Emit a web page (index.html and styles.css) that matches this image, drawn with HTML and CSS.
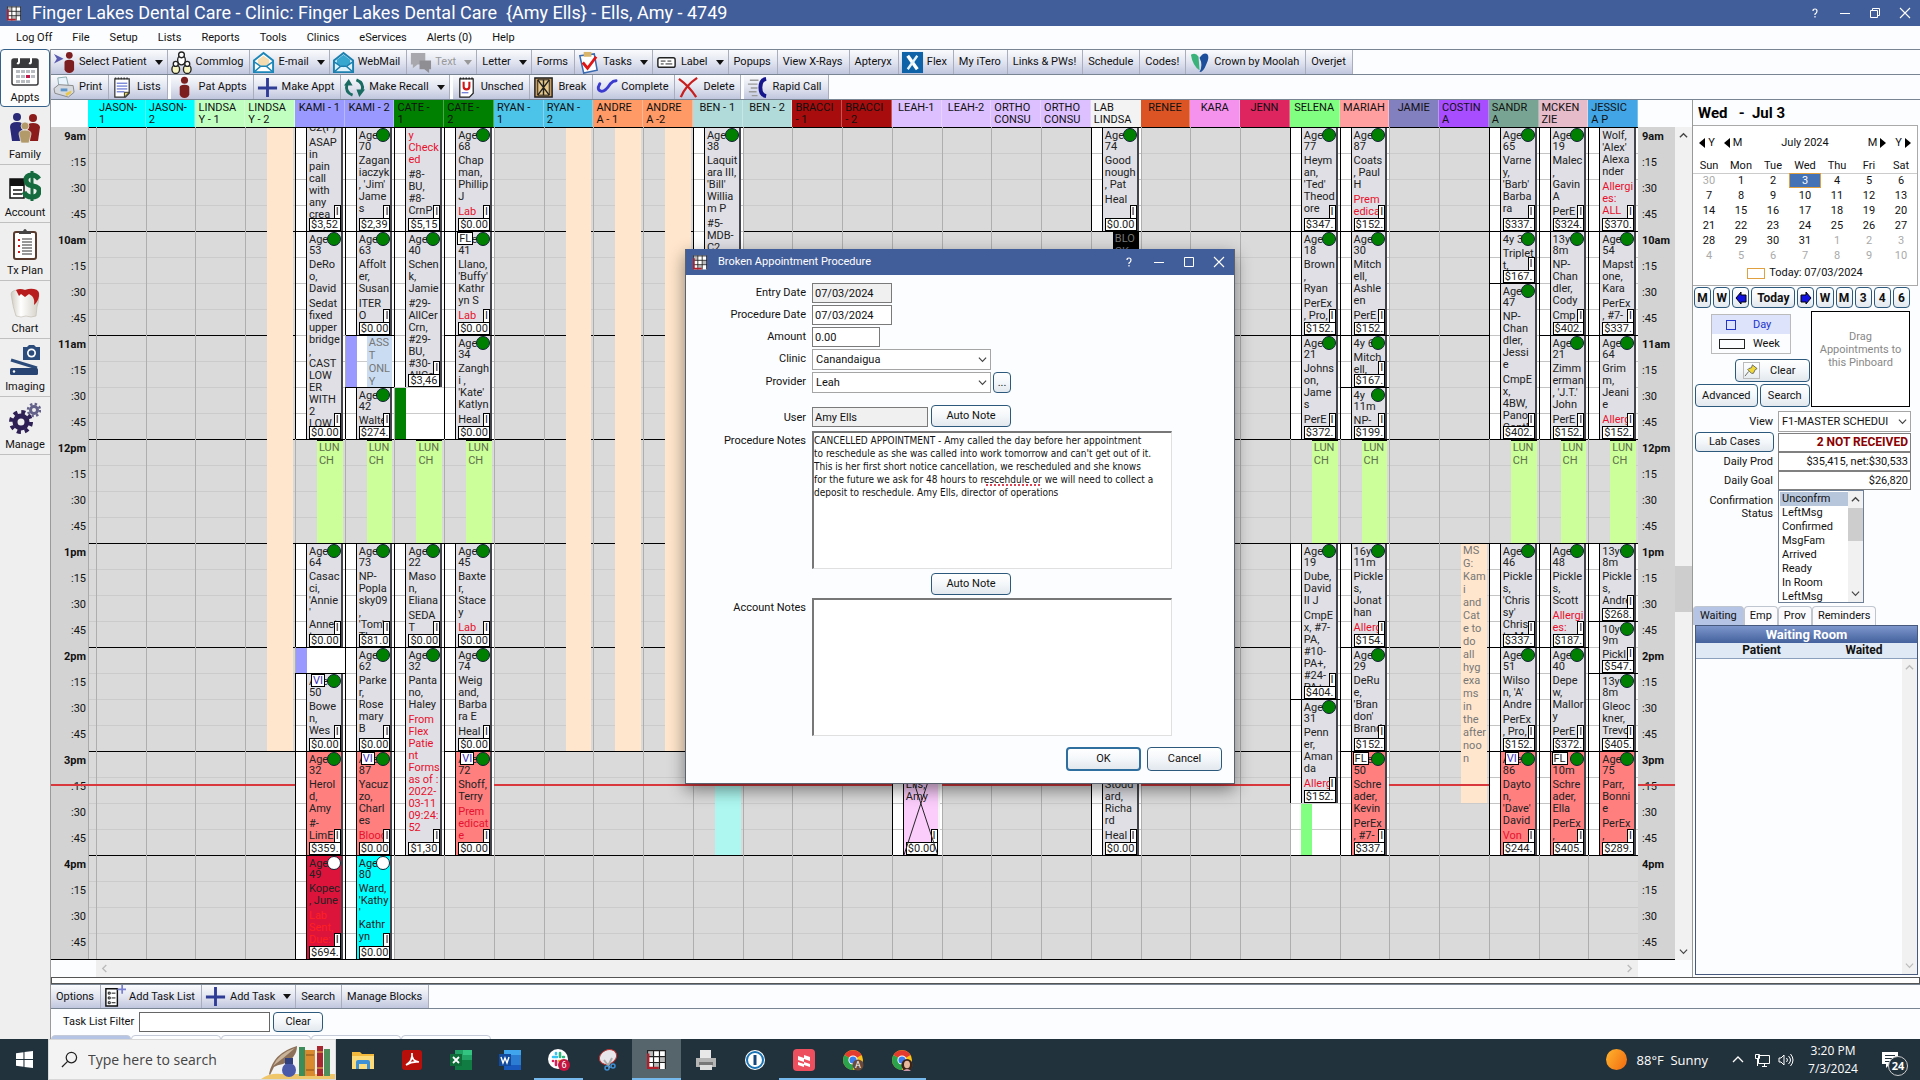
FILE: index.html
```html
<!DOCTYPE html>
<html lang="en">
<head>
  <meta charset="UTF-8">
  <title>Finger Lakes Dental Care</title>
  <meta name="viewport" content="width=device-width, initial-scale=1.0">
  <link rel="stylesheet" href="styles.css">
</head>
<body>

<svg class="sprite" xmlns="http://www.w3.org/2000/svg">
  <symbol id="i-app" viewBox="0 0 16 16">
    <path fill="#fff" d="M0 0h16v16H0z"/><path fill="#bbb" d="M1 1h4v4H1zM11 6h4v4h-4zM6 11h4v4H6z"/>
    <path stroke="#222" d="M0 5.500h16M0 10.500h16M5.500 0v16M10.500 0v16M.5 0v16M15.500 0v16M0 .5h16" fill="none"/>
    <path stroke="#b0202c" stroke-width="2" d="M1 3v12h9" fill="none"/>
  </symbol>
  <symbol id="i-person" viewBox="0 0 24 24"><circle cx="12" cy="4.500" r="3.700" fill="#7c1d20"/><path fill="#7c1d20" d="M7 12q0-3 5-3t5 3v7q-1 4-5 4t-5-4z"/></symbol>
  <symbol id="i-select" viewBox="0 0 24 24"><path fill="#5a5ab0" d="M1 3l10 5-10 5 3-5z"/><circle cx="17" cy="4.500" r="3.500" fill="#7c1d20"/><path fill="#7c1d20" d="M12 12q0-3 5-3t5 3v7q-1 4-5 4t-5-4z"/></symbol>
  <symbol id="i-commlog" viewBox="0 0 24 24"><g fill="#fff" stroke="#222" stroke-width="1.400"><ellipse cx="12" cy="9.500" rx="4" ry="5"/><circle cx="12" cy="4" r="3"/><ellipse cx="6" cy="19" rx="4" ry="4.500" fill="#f7f5c0"/><circle cx="6" cy="13.500" r="2.600"/><ellipse cx="18" cy="19" rx="4" ry="4.500" fill="#f7f5c0"/><circle cx="18" cy="13.500" r="2.600"/></g></symbol>
  <symbol id="i-mail" viewBox="0 0 24 24"><path fill="#fff" stroke="#1c86b8" stroke-width="2" d="M2 10l10-8 10 8v12H2z"/><path fill="#f5dcb0" d="M6 9l6-4 6 4v4l-6 4-6-4z"/><path fill="none" stroke="#1c86b8" stroke-width="1.500" d="M2 11l7 5-7 6M22 11l-7 5 7 6M9 16h6"/></symbol>
  <symbol id="i-webmail" viewBox="0 0 24 24"><path fill="#dff2fb" stroke="#1c7fae" stroke-width="2" d="M2 10l10-8 10 8v12H2z"/><path fill="#38a7d0" d="M5 9l7-5 7 5v4l-7 4-7-4z"/><path fill="none" stroke="#1c7fae" stroke-width="1.500" d="M2 11l7 5-7 6M22 11l-7 5 7 6M9 16h6"/></symbol>
  <symbol id="i-text" viewBox="0 0 24 24"><path fill="#a9a9ad" d="M2 2h15v12H9l-5 4v-4H2z"/><path fill="#8e8e93" d="M11 10h12v9h-2v4l-5-4h-5z"/></symbol>
  <symbol id="i-tasks" viewBox="0 0 24 24"><path fill="#fff" stroke="#3a6ab0" stroke-width="1.600" d="M3 5l15-2 3 17-14 3z"/><path fill="#d8b56a" d="M7 1h8v5H7z"/><path fill="none" stroke="#e01515" stroke-width="3" d="M6 12l5 6L20 6"/></symbol>
  <symbol id="i-label" viewBox="0 0 24 24"><rect x="3" y="7" width="18" height="10" rx="2" fill="#fff" stroke="#222" stroke-width="1.500"/><path stroke="#222" d="M6 10.500h5M13 10.500h4M6 13.500h3M11 13.500h7"/></symbol>
  <symbol id="i-flex" viewBox="0 0 24 24"><path fill="#0e62a8" d="M1 1h22v22H1z"/><path fill="none" stroke="#fff" stroke-width="3.500" d="M7 5l10 14"/><path stroke="#e6f4fc" stroke-width="2.500" d="M17 5L7 19"/></symbol>
  <symbol id="i-moolah" viewBox="0 0 24 24"><path fill="#1c4e9b" d="M12 7q4-6 8-4 3 3-1 11-3 8-7 8 4-7 0-15z"/><path fill="#3bb27a" d="M3 4q5-3 8 2l1 14Q5 16 3 4z"/></symbol>
  <symbol id="i-print" viewBox="0 0 24 24"><path fill="#e9f3fb" stroke="#8aa" d="M5 2l9-1 2 9H6z"/><path fill="#d6d9dd" stroke="#888" d="M1 13l5-4 15 1 1 7-6 5-14-4z"/><path fill="#5b95c9" d="M8 13h7v3H8z"/><path fill="#e8c74f" d="M13 18l6-3v3l-5 3z"/></symbol>
  <symbol id="i-lists" viewBox="0 0 24 24"><path fill="#fff" stroke="#333" stroke-width="1.300" d="M4 3h15v15l-4 4H4z"/><path stroke="#333" stroke-width="2" stroke-dasharray="1.500 1.500" d="M4 2.500h15"/><path stroke="#3c50c8" d="M6 7.500h11M6 10.500h11M6 13.500h11M6 16.500h8"/><path fill="#e0d45a" stroke="#333" d="M14 22v-5h5z"/></symbol>
  <symbol id="i-plus" viewBox="0 0 24 24"><path fill="currentColor" d="M10.500 2h3v9H22v3h-8.500v8h-3v-8H2v-3h8.500z"/></symbol>
  <symbol id="i-recall" viewBox="0 0 24 24"><g fill="none" stroke="#1a6b62" stroke-width="3"><path d="M10 20Q2 17 4 9"/><path d="M14 4q8 3 6 11"/></g><path fill="#1a6b62" d="M1 10l5-7 4 7zM14 14h9l-6 8z"/></symbol>
  <symbol id="i-unsched" viewBox="0 0 24 24"><path fill="#fff" stroke="#222" stroke-width="1.300" d="M5 3h14v15l-4 4H5z"/><path stroke="#222" stroke-width="2" stroke-dasharray="1.500 1.500" d="M5 2.500h14"/><path fill="none" stroke="#d01818" stroke-width="2.200" d="M9 6v5q0 3 3 3t3-3V6"/><path stroke="#3c50c8" d="M7 17.500h7"/></symbol>
  <symbol id="i-break" viewBox="0 0 24 24"><path fill="#c69b5b" stroke="#222" stroke-width="1.500" d="M3 2h18v20H3z"/><path fill="#e8c98a" stroke="#222" d="M6 4h12v16H6z"/><path stroke="#222" stroke-width="1.500" d="M6 4l12 16M18 4L6 20M12 4v16" fill="none"/></symbol>
  <symbol id="i-done" viewBox="0 0 24 24"><path fill="none" stroke="#3b3bd0" stroke-width="3" stroke-linecap="round" d="M5 8q-4 7 2 8 4 0 9-8 3-3 6-3"/></symbol>
  <symbol id="i-delete" viewBox="0 0 24 24"><path fill="none" stroke="#c81e1e" stroke-width="2.400" d="M2 3q11 8 18 19M21 2Q9 10 4 22"/></symbol>
  <symbol id="i-call" viewBox="0 0 24 24"><path stroke="#9a9a9a" stroke-width="1.500" d="M4 4.500h9M2 8.500h10M5 12.500h7M3 16.500h8M6 20.500h6"/><path fill="none" stroke="#15158c" stroke-width="4" d="M21 3q-6 1-6 9t6 9"/></symbol>
  <symbol id="i-tasklist" viewBox="0 0 24 24"><path fill="#fff" stroke="#111" stroke-width="1.500" d="M3 4h12v18H3z"/><path fill="none" stroke="#111" d="M5.500 7.500h2v2h-2zM5.500 12.500h2v2h-2zM5.500 17.500h2v2h-2zM9 8.500h4M9 13.500h4M9 18.500h4"/><path stroke="#7a7fd0" stroke-width="1.800" d="M20 0v9M15 4.500h9"/></symbol>

  <symbol id="n-appts" viewBox="0 0 32 32"><rect x="3" y="4" width="26" height="26" rx="2" fill="#fff" stroke="#3a3a3c" stroke-width="1.500"/><path fill="#3a3a3c" d="M3 4h26v9H3z"/><path stroke="#fff" stroke-width="2" fill="none" d="M10 2v5q0 2-2 1M22 2v5q0 2-2 1"/><g fill="#b9bcc0"><path d="M7 15h4v3H7zM12 15h4v3h-4zM17 15h4v3h-4zM22 15h4v3h-4zM7 20h4v3H7zM12 20h4v3h-4zM22 20h4v3h-4zM7 25h4v3H7zM12 25h4v3h-4zM17 25h4v3h-4z"/></g><path fill="#c01848" d="M17 20h4v3h-4z"/></symbol>
  <symbol id="n-family" viewBox="0 0 32 32"><g fill="#2a2a78"><circle cx="8" cy="5" r="4"/><path d="M1 15q0-5 7-5t6 5l-2 14H3z"/></g><g fill="#8c1c1c"><circle cx="24" cy="6" r="4"/><path d="M18 15q0-4 6-4t7 4l-2 14h-8z"/></g><g fill="#b39a6b" stroke="#f0f0f0" stroke-width=".7"><circle cx="16" cy="14" r="4"/><path d="M10 22q0-4 6-4t6 4l-2 9h-8z"/></g></symbol>
  <symbol id="n-account" viewBox="0 0 32 32"><path d="M1 9h14v19H1z" fill="#fff" stroke="#111" stroke-width="1.500"/><path fill="#111" d="M1 9h14v7H1z"/><path stroke="#111" stroke-width="1.500" d="M4 20h9M4 24h9"/><path fill="none" stroke="#156b3e" stroke-width="5" d="M30 9q-3-4-7-4-6 0-6 5t7 6 6 6-7 5-8-5"/><path stroke="#156b3e" stroke-width="3" d="M23 1v30"/></symbol>
  <symbol id="n-tx" viewBox="0 0 32 32"><rect x="5" y="4" width="22" height="27" rx="2" fill="#fff" stroke="#5a3a2c" stroke-width="2"/><path fill="#444" d="M10 6V3h4q2-4 4 0h4v3z"/><path stroke="#d01818" stroke-width="2" d="M9 12h2M9 18h2M9 24h2"/><path stroke="#777" stroke-width="1.500" d="M13 11h10M13 14h10M13 17h10M13 20h10M13 23h10M13 26h10"/></symbol>
  <symbol id="n-chart" viewBox="0 0 32 32">
    <linearGradient id="tooth"><stop offset="0" stop-color="#cfccc0"/><stop offset=".35" stop-color="#fff"/><stop offset="1" stop-color="#d2cfc4"/></linearGradient>
    <path fill="url(#tooth)" stroke="#bdb9ac" stroke-width=".6" d="M2 8q0-5 14-4 13-1 14 4 0 8-2 13l-1 9q-5 2-10 0-5 2-10 0Q4 22 2 8z"/>
    <path fill="#b91c1c" d="M7 4q4-2 9 0 5-2 9-1 6 1 5 7-1 6-5 9 1-6-2-9l-3-2-4 3-4-3-2 2-2-4z"/>
  </symbol>
  <symbol id="n-imaging" viewBox="0 0 32 32"><path fill="#2c4c7c" d="M14 3h4l2-2h5l2 2h4v13H14z"/><circle cx="22.500" cy="9" r="4.500" fill="#fff"/><circle cx="22.500" cy="9" r="2.800" fill="#2c4c7c"/><path stroke="#2c4c7c" stroke-width="3" d="M2 16l26 8"/><rect x="1" y="24" width="28" height="7" rx="1.500" fill="#274472"/><circle cx="5" cy="27.500" r="1.200" fill="#fff"/></symbol>
  <symbol id="n-manage" viewBox="0 0 32 32"><circle cx="12" cy="20" r="6" fill="none" stroke="#2e1f54" stroke-width="5"/><circle cx="12" cy="20" r="10" fill="none" stroke="#2e1f54" stroke-width="4" stroke-dasharray="4 3.850"/><circle cx="25" cy="8" r="3.500" fill="none" stroke="#63618a" stroke-width="3"/><circle cx="25" cy="8" r="6" fill="none" stroke="#63618a" stroke-width="2.500" stroke-dasharray="2.400 2.300"/></symbol>

  <symbol id="w-help" viewBox="0 0 12 12"><path fill="none" stroke="#fff" stroke-width="1.200" d="M4 4q0-2 2-2t2 2-2 3v1M6 9v1.500"/></symbol>
  <symbol id="w-min" viewBox="0 0 12 12"><path stroke="#fff" d="M1 6.500h10"/></symbol>
  <symbol id="w-max" viewBox="0 0 12 12"><path fill="none" stroke="#fff" d="M1.500 1.500h9v9h-9z"/></symbol>
  <symbol id="w-restore" viewBox="0 0 12 12"><path fill="none" stroke="#fff" d="M1.500 3.500h7v7h-7zM3.500 3V1.500h7v7H9"/></symbol>
  <symbol id="w-close" viewBox="0 0 12 12"><path stroke="#fff" stroke-width="1.100" d="M1 1l10 10M11 1L1 11"/></symbol>

  <symbol id="c-down" viewBox="0 0 10 10"><path fill="none" stroke="currentColor" stroke-width="1.300" d="M1 3l4 4 4-4"/></symbol>
  <symbol id="c-up" viewBox="0 0 10 10"><path fill="none" stroke="currentColor" stroke-width="1.500" d="M1 7l4-4 4 4"/></symbol>
  <symbol id="c-left" viewBox="0 0 10 10"><path fill="none" stroke="currentColor" stroke-width="1.500" d="M7 1L3 5l4 4"/></symbol>
  <symbol id="c-right" viewBox="0 0 10 10"><path fill="none" stroke="currentColor" stroke-width="1.500" d="M3 1l4 4-4 4"/></symbol>
  <symbol id="a-left" viewBox="0 0 12 14"><path fill="#1212e0" stroke="#000" d="M6 1v3h5v7H6v2L1 7z"/></symbol>
  <symbol id="a-right" viewBox="0 0 12 14"><path fill="#1212e0" stroke="#000" d="M6 1v3H1v7h5v2l5-6z"/></symbol>

  <symbol id="t-explorer" viewBox="0 0 24 24"><path fill="#f3b93c" d="M1 4h8l2 2h12v15H1z"/><path fill="#fcdc7a" d="M1 8h22v13H1z"/><path fill="#3d8fd6" d="M5 21v-7q0-2 2-2h10q2 0 2 2v7h-3v-5H8v5z"/></symbol>
  <symbol id="t-acrobat" viewBox="0 0 24 24"><rect x="2" y="2" width="20" height="20" rx="3" fill="#b80f0a"/><path fill="none" stroke="#fff" stroke-width="1.700" d="M6 17q7-4 6-12-1 8 7 9-7-1-13 3z"/></symbol>
  <symbol id="t-excel" viewBox="0 0 24 24"><path fill="#21a366" d="M6 2h17v20H6z"/><path fill="#107c41" d="M6 12h17v10H6z"/><path fill="#33c481" d="M14 2h9v5h-9z"/><path fill="#0f6b38" d="M1 6h12v12H1z"/><path stroke="#fff" stroke-width="1.800" d="M4 9l6 6M10 9l-6 6"/></symbol>
  <symbol id="t-word" viewBox="0 0 24 24"><path fill="#41a5ee" d="M6 2h17v5H6z"/><path fill="#2b7cd3" d="M6 7h17v10H6z"/><path fill="#185abd" d="M6 17h17v5H6z"/><path fill="#124a9e" d="M1 6h12v12H1z"/><path fill="none" stroke="#fff" stroke-width="1.400" d="M3 9l2 6 2-5 2 5 2-6"/></symbol>
  <symbol id="t-slack" viewBox="0 0 24 24"><circle cx="11" cy="11" r="10" fill="#fff"/><g stroke-width="2.600" stroke-linecap="round"><path stroke="#36c5f0" d="M6 9h4M9 5v1"/><path stroke="#2eb67d" d="M13 5v4M16 9h1"/><path stroke="#ecb22e" d="M12 13h4"/><path stroke="#e01e5a" d="M9 13v4M6 13h0"/></g><circle cx="17" cy="17" r="6" fill="#c3153f"/></symbol>
  <symbol id="t-snip" viewBox="0 0 24 24"><ellipse cx="12" cy="9" rx="9" ry="7" fill="#e8e6ea" stroke="#b33" transform="rotate(-25 12 9)"/><path stroke="#aaa" stroke-width="2" d="M8 12l6 8M16 10l-4 8"/><circle cx="11" cy="20" r="2" fill="none" stroke="#3d8fd6" stroke-width="1.500"/><circle cx="17" cy="18" r="2" fill="none" stroke="#3d8fd6" stroke-width="1.500"/></symbol>
  <symbol id="t-printer" viewBox="0 0 24 24"><path fill="#e8e8e8" d="M6 2h11v8H6z"/><path fill="#b5b5b5" d="M2 10h20v9H2z"/><path fill="#777" d="M5 14h14v3H5z"/><path fill="#ddd" d="M6 17h12v5H6z"/></symbol>
  <symbol id="t-onepw" viewBox="0 0 24 24"><circle cx="12" cy="12" r="10" fill="#fff"/><circle cx="12" cy="12" r="8" fill="none" stroke="#1a73b5" stroke-width="2"/><path fill="#16467a" d="M10.500 7h3v10h-3z"/></symbol>
  <symbol id="t-red" viewBox="0 0 24 24"><rect x="1" y="1" width="22" height="22" rx="4" fill="#ee4f5f"/><path fill="#fff" d="M6 8l6 2V7l6 2v4l-6-2v3l-6-2zM6 14l6 2v-2l6 2v3l-6-2v2l-6-2z"/></symbol>
  <symbol id="t-chrome" viewBox="0 0 24 24"><circle cx="12" cy="12" r="10" fill="#fbc116"/><path fill="#e33b2e" d="M12 12L3.500 7a10 10 0 0117 0z"/><path fill="#2ba24c" d="M12 12v10A10 10 0 013.400 7z"/><circle cx="12" cy="12" r="4.600" fill="#fff"/><circle cx="12" cy="12" r="3.600" fill="#3b7ded"/><circle cx="17" cy="17" r="5.500" fill="#6b4a3c"/></symbol>
  <symbol id="t-face" viewBox="0 0 24 24"><ellipse cx="17" cy="17" rx="5.500" ry="6" fill="#3b2418"/><ellipse cx="17" cy="16.500" rx="3" ry="3.800" fill="#e8b99a"/><path fill="#c9a" d="M13 23q4-4 8 0z"/></symbol>
</svg>

<header class="titlebar">
  <svg class="app-icon"><use href="#i-app"/></svg>
  <h1>Finger Lakes Dental Care - Clinic: Finger Lakes Dental Care&nbsp; {Amy Ells} - Ells, Amy - 4749</h1>
  <div class="win-buttons">
    <button aria-label="Help"><svg><use href="#w-help"/></svg></button>
    <button aria-label="Minimize"><svg><use href="#w-min"/></svg></button>
    <button aria-label="Restore"><svg><use href="#w-restore"/></svg></button>
    <button aria-label="Close"><svg><use href="#w-close"/></svg></button>
  </div>
</header>

<nav class="menubar">
  <button>Log Off</button><button>File</button><button>Setup</button><button>Lists</button><button>Reports</button><button>Tools</button><button>Clinics</button><button>eServices</button><button>Alerts (0)</button><button>Help</button>
</nav>

<div class="workspace">
  <nav class="modules">
    <button class="active"><svg><use href="#n-appts"/></svg>Appts</button>
    <button><svg><use href="#n-family"/></svg>Family</button>
    <button><svg><use href="#n-account"/></svg>Account</button>
    <button><svg><use href="#n-tx"/></svg>Tx Plan</button>
    <button><svg><use href="#n-chart"/></svg>Chart</button>
    <button><svg><use href="#n-imaging"/></svg>Imaging</button>
    <button><svg><use href="#n-manage"/></svg>Manage</button>
  </nav>

  <main class="main">
    <div class="toolbar">
      <button class="drop"><svg><use href="#i-select"/></svg>Select Patient</button>
      <button><svg><use href="#i-commlog"/></svg>Commlog</button>
      <button class="drop"><svg><use href="#i-mail"/></svg>E-mail</button>
      <button><svg><use href="#i-webmail"/></svg>WebMail</button>
      <button class="drop" disabled><svg><use href="#i-text"/></svg>Text</button>
      <button class="drop">Letter</button>
      <button>Forms</button>
      <button class="drop"><svg><use href="#i-tasks"/></svg>Tasks</button>
      <button class="drop"><svg><use href="#i-label"/></svg>Label</button>
      <button>Popups</button>
      <button>View X-Rays</button>
      <button>Apteryx</button>
      <button><svg><use href="#i-flex"/></svg>Flex</button>
      <button>My iTero</button>
      <button>Links &amp; PWs!</button>
      <button>Schedule</button>
      <button>Codes!</button>
      <button><svg><use href="#i-moolah"/></svg>Crown by Moolah</button>
      <button>Overjet</button>
    </div>
    <div class="toolbar">
      <button><svg><use href="#i-print"/></svg>Print</button>
      <button><svg><use href="#i-lists"/></svg>Lists</button>
      <span class="split"></span>
      <button><svg><use href="#i-person"/></svg>Pat Appts</button>
      <button><svg><use href="#i-plus"/></svg>Make Appt</button>
      <button class="drop"><svg><use href="#i-recall"/></svg>Make Recall</button>
      <span class="split"></span>
      <button><svg><use href="#i-unsched"/></svg>Unsched</button>
      <button><svg><use href="#i-break"/></svg>Break</button>
      <button><svg><use href="#i-done"/></svg>Complete</button>
      <button><svg><use href="#i-delete"/></svg>Delete</button>
      <span class="split"></span>
      <button><svg><use href="#i-call"/></svg>Rapid Call</button>
    </div>

    <div class="content">
      <section class="schedule">
        <div class="ops" id="ops"></div>
        <div class="sched-body" id="schedBody">
          <div class="times" id="timesLeft"></div>
          <div class="strip"></div>
          <div class="columns" id="columns"></div>
          <div class="times right" id="timesRight"></div>
        </div>
        <div class="hscroll"><svg><use href="#c-left"/></svg><svg><use href="#c-right"/></svg></div>
      </section>
      <div class="vscroll"><svg><use href="#c-up"/></svg><span class="thumb"></span><svg><use href="#c-down"/></svg></div>

      <aside class="panel">
        <h2>Wed&nbsp;&nbsp; -&nbsp; Jul 3</h2>
        <div class="calendar">
          <div class="cal-nav">
            <button><i class="back"></i>Y</button><button><i class="back"></i>M</button><span>July 2024</span><button>M<i class="fwd"></i></button><button>Y<i class="fwd"></i></button>
          </div>
          <table>
            <thead><tr><th>Sun</th><th>Mon</th><th>Tue</th><th>Wed</th><th>Thu</th><th>Fri</th><th>Sat</th></tr></thead>
            <tbody id="days"></tbody>
          </table>
          <div class="cal-today"><i></i>Today: 07/03/2024</div>
        </div>

        <div class="jump">
          <button>M</button><button>W</button><button aria-label="Back"><svg><use href="#a-left"/></svg></button><button class="today">Today</button><button aria-label="Forward"><svg><use href="#a-right"/></svg></button><button>W</button><button>M</button><button>3</button><button>4</button><button>6</button>
        </div>

        <div class="pin-row">
          <div class="pin-left">
            <div class="range">
              <button class="on"><i></i><span>Day</span></button>
              <button><i class="wide"></i><span>Week</span></button>
            </div>
            <button class="btn clear"><svg viewBox="0 0 16 16"><path fill="#f2d93a" stroke="#665" d="M9 2l5 4-2 1-2 4-2 0-4-4 1-1 3-1z"/><path stroke="#665" d="M5 9l-4 5"/></svg>Clear</button>
            <div class="pair"><button class="btn">Advanced</button><button class="btn">Search</button></div>
          </div>
          <div class="pinboard">Drag<br>Appointments to<br>this Pinboard</div>
        </div>

        <div class="facts">
          <label for="view">View</label>
          <div class="combo"><select id="view"><option>F1-MASTER SCHEDUI</option></select><svg><use href="#c-down"/></svg></div>
          <button class="btn">Lab Cases</button>
          <input class="alert" aria-label="Lab cases" value="2 NOT RECEIVED" readonly>
          <label for="prod">Daily Prod</label>
          <input id="prod" value="$35,415, net:$30,533" readonly>
          <label for="goal">Daily Goal</label>
          <input id="goal" value="$26,820" readonly>
          <label for="status" class="top">Confirmation<br>Status</label>
          <div class="listbox">
            <select id="status" size="8">
              <option class="sel">Unconfrm</option><option>LeftMsg</option><option>Confirmed</option><option>MsgFam</option><option>Arrived</option><option>Ready</option><option>In Room</option><option>LeftMsg</option>
            </select>
            <div class="vscroll small"><svg><use href="#c-up"/></svg><span class="thumb"></span><svg><use href="#c-down"/></svg></div>
          </div>
        </div>

        <div class="tabs"><button class="active">Waiting</button><button>Emp</button><button>Prov</button><button>Reminders</button></div>
        <div class="waiting">
          <table>
            <caption>Waiting Room</caption>
            <thead><tr><th>Patient</th><th>Waited</th></tr></thead>
          </table>
          <div class="vscroll faint"><svg><use href="#c-up"/></svg><svg><use href="#c-down"/></svg></div>
        </div>
      </aside>
    </div>

    <div class="splitter"></div>
    <div class="toolbar tasks">
      <button>Options</button>
      <button><svg><use href="#i-tasklist"/></svg>Add Task List</button>
      <button class="drop"><svg><use href="#i-plus"/></svg>Add Task</button>
      <button>Search</button>
      <button>Manage Blocks</button>
    </div>
    <div class="filter">
      <label for="filter">Task List Filter</label>
      <input id="filter" type="text">
      <button class="btn">Clear</button>
    </div>
    <div class="tab-edge"><i class="on"></i><i></i><i></i><i></i><i></i></div>
  </main>
</div>

<footer class="taskbar">
  <button class="start" aria-label="Start"><svg viewBox="0 0 16 16"><path fill="#fff" d="M0 2.200l7-1v6.300H0zM8 1l8-1v7.500H8zM0 8.500h7v6.300l-7-1zM8 8.500h8V16l-8-1z"/></svg></button>
  <div class="search">
    <svg class="lens" viewBox="0 0 18 18"><circle cx="11" cy="7" r="5.500" fill="none" stroke="#222" stroke-width="1.300"/><path stroke="#222" stroke-width="1.300" d="M7 11l-6 6"/></svg>
    <input type="text" aria-label="Search" placeholder="Type here to search">
    <svg class="art" viewBox="0 0 76 38"><path fill="#f0c66a" d="M2 38q8-6 20-5h54v5z"/><path fill="#8d7058" d="M10 33Q14 12 38 5q0 12-14 18-6 1-9 3l-4 8z"/><path fill="#c9b49a" d="M14 25Q20 12 36 7 26 16 14 25z"/><circle cx="30" cy="29" r="7" fill="#4a5aa8"/><path fill="#31407e" d="M26 17h8v6h-8z"/><path fill="#3c8c5a" d="M40 6h6v29h-6z"/><path fill="#d98a2e" d="M46 9h10v26H46z"/><path stroke="#8a4f14" d="M47 14h8M47 29h8"/><path fill="#a9272f" d="M58 5h6v30h-6z"/><path stroke="#eac24e" d="M58 11h6M58 27h6"/><path fill="#4f8f5c" d="M65 8h6v27h-6z"/></svg>
  </div>
  <div class="apps">
    <button aria-label="File Explorer"><svg><use href="#t-explorer"/></svg></button>
    <button aria-label="Acrobat"><svg><use href="#t-acrobat"/></svg></button>
    <button aria-label="Excel"><svg><use href="#t-excel"/></svg></button>
    <button aria-label="Word"><svg><use href="#t-word"/></svg></button>
    <button class="open" aria-label="Slack"><svg><use href="#t-slack"/></svg><b>6</b></button>
    <button aria-label="Snip"><svg><use href="#t-snip"/></svg></button>
    <button class="open current" aria-label="Open Dental"><svg><use href="#i-app"/></svg></button>
    <button aria-label="Printer"><svg><use href="#t-printer"/></svg></button>
    <button aria-label="1Password"><svg><use href="#t-onepw"/></svg></button>
    <button class="open" aria-label="Phone"><svg><use href="#t-red"/></svg></button>
    <button class="open" aria-label="Chrome"><svg><use href="#t-chrome"/></svg><b>A</b></button>
    <button class="open" aria-label="Chrome profile"><svg><use href="#t-chrome"/><use href="#t-face"/></svg></button>
  </div>
  <div class="tray">
    <i class="sun"></i><span class="weather">88°F&nbsp; Sunny</span>
    <svg viewBox="0 0 16 16"><path fill="none" stroke="#fff" stroke-width="1.300" d="M3 10l5-5 5 5"/></svg>
    <svg viewBox="0 0 16 16"><path fill="none" stroke="#fff" d="M4.500 3.500h11v8h-11zM8 14.500h5M10.500 12v2M1.500 2.500h4v4h-4zM3.500 7v7"/></svg>
    <svg viewBox="0 0 16 16"><path fill="none" stroke="#fff" d="M1 6h2l3-3v10l-3-3H1zM8.500 6q2 2 0 4M10.500 4q4 4 0 8M12.500 2q5 6 0 12"/></svg>
    <div class="clock">3:20 PM<br>7/3/2024</div>
    <button class="notes" aria-label="Notifications"><svg viewBox="0 0 18 18"><path fill="#fff" d="M1 1h16v12H9l-4 4v-4H1z"/><path stroke="#22323c" d="M4 4.500h10M4 7.500h10M4 10.500h7"/></svg><b>24</b></button>
  </div>
</footer>

<div class="dialog" role="dialog" aria-labelledby="dlgTitle">
  <div class="titlebar">
    <svg class="app-icon"><use href="#i-app"/></svg>
    <h2 id="dlgTitle">Broken Appointment Procedure</h2>
    <div class="win-buttons">
      <button aria-label="Help"><svg><use href="#w-help"/></svg></button>
      <button aria-label="Minimize"><svg><use href="#w-min"/></svg></button>
      <button aria-label="Maximize"><svg><use href="#w-max"/></svg></button>
      <button aria-label="Close"><svg><use href="#w-close"/></svg></button>
    </div>
  </div>
  <form class="form">
    <div class="row"><label for="entry">Entry Date</label><input id="entry" class="w-date" value="07/03/2024" readonly></div>
    <div class="row"><label for="procdate">Procedure Date</label><input id="procdate" class="w-date" value="07/03/2024"></div>
    <div class="row"><label for="amount">Amount</label><input id="amount" class="w-amount" value="0.00"></div>
    <div class="row"><label for="clinic">Clinic</label><div class="combo"><select id="clinic"><option>Canandaigua</option></select><svg><use href="#c-down"/></svg></div></div>
    <div class="row"><label for="provider">Provider</label><div class="combo"><select id="provider"><option>Leah</option></select><svg><use href="#c-down"/></svg></div><button type="button" class="btn dots">...</button></div>
    <div class="row user"><label for="user">User</label><input id="user" class="w-user" value="Amy Ells" readonly><button type="button" class="btn note">Auto Note</button></div>
    <div class="row area"><label for="pnotes">Procedure Notes</label>
      <div class="memo"><textarea id="pnotes" spellcheck="false">CANCELLED APPOINTMENT - Amy called the day before her appointment
to reschedule as she was called into work tomorrow and can't get out of it.
This is her first short notice cancellation, we rescheduled and she knows
for the future we ask for 48 hours to rescehdule or we will need to collect a
deposit to reschedule. Amy Ells, director of operations</textarea><i class="squiggle"></i></div></div>
    <div class="row second"><button type="button" class="btn note">Auto Note</button></div>
    <div class="row area"><label for="anotes">Account Notes</label><div class="memo"><textarea id="anotes"></textarea></div></div>
    <div class="actions"><button type="button" class="btn ok">OK</button><button type="button" class="btn">Cancel</button></div>
  </form>
</div>

<script src="script.js"></script>
</body>
</html>
```

FILE: styles.css
```css
* { box-sizing: border-box; margin: 0; padding: 0; }
body {
  font-family: Roboto, "Liberation Sans", sans-serif;
  font-size: 11px;
  line-height: 12px;
  color: #111;
  background: #fcfdfe;
  position: relative;
  overflow: hidden;
}
button, input, select, textarea { font: inherit; color: inherit; border-radius: 0; }
button { background: none; border: none; cursor: pointer; white-space: nowrap; }
input, textarea, select { outline: none; }
table { border-collapse: collapse; }
.sprite { position: absolute; width: 0; height: 0; }

/* title bars */
.titlebar {
  display: flex;
  align-items: center;
  height: 26px;
  padding-left: 7px;
  background: #425e9a;
  color: #fff;
}
.titlebar h1 { font-size: 18px; font-weight: 400; line-height: 24px; }
.titlebar h2 { font-size: 11px; font-weight: 400; }
.app-icon { width: 14px; height: 15px; margin-right: 11px; }
.win-buttons { display: flex; margin-left: auto; }
.win-buttons button { width: 30px; height: 26px; display: flex; align-items: center; justify-content: center; }
.win-buttons svg { width: 12px; height: 12px; }

.menubar { display: flex; gap: 20px; height: 23px; padding-left: 16px; }

.workspace { display: flex; align-items: stretch; }
.modules {
  width: 51px;
  flex: none;
  background: #efefef;
  border-right: 1px solid #9a9a9a;
}
.modules button {
  display: flex;
  flex-direction: column;
  align-items: center;
  gap: 5px;
  width: 100%;
  height: 58px;
  padding-top: 5px;
  border-bottom: 1px solid #c0c0c0;
}
.modules svg { width: 32px; height: 32px; }
.modules .active { background: #fcfcfc; border: 1px solid #35608a; border-radius: 4px; }

.main { flex: 1; min-width: 0; }

.toolbar {
  display: flex;
  height: 25px;
  border-top: 1px solid #7a8594;
}
.toolbar button {
  display: flex;
  align-items: center;
  padding: 0 6px 0 5px;
  border-right: 1px solid #a9adbe;
  background: linear-gradient(#fafbfd, #e2e5f0 50%, #c0c6de);
}
.toolbar .drop { padding-right: 4px; }
.toolbar svg { width: 23px; height: 23px; margin: 0 3px 0 -3px; color: #2f3c96; }
.toolbar .drop::after {
  content: "";
  border: 4px solid transparent;
  border-top: 5px solid #111;
  border-bottom: none;
  margin-left: 8px;
}
.toolbar button:disabled { color: #999; }
.toolbar .drop:disabled::after { border-top-color: #999; }
.toolbar .split { width: 3px; }

.content { display: flex; border-top: 1px solid #7a8594; }

/* schedule */
.schedule { flex: 1; min-width: 0; }
.ops {
  display: grid;
  grid-template-columns: repeat(31, minmax(0, 1fr));
  height: 27px;
  margin: 0 37px 0 45px;
  box-shadow: -8px 0 #00ffff;
}
.ops div { padding: 2px 0 0 3px; overflow: hidden; border-right: 1px solid rgba(255,255,255,.3); }
.ops .mid { text-align: center; padding-left: 0; }
.sched-body { display: flex; position: relative; overflow: hidden; height: 833px; border-bottom: 1px solid #000; }
.times { width: 37px; background: #d3d3d3; text-align: right; padding-right: 2px; }
.times.right { text-align: left; padding: 0 0 0 4px; }
.times div { height: 26px; padding-top: 4px; }
.times .hour { font-weight: 700; }
.strip, .columns > div {
  background:
    repeating-linear-gradient(#000 0 1px, transparent 1px 104px),
    repeating-linear-gradient(#cbcbcb 0 1px, transparent 1px 26px),
    #dadada;
}
.strip { width: 8px; border-left: 1px solid #aaa; }
.columns {
  flex: 1;
  display: grid;
  grid-template-columns: repeat(31, minmax(0, 1fr));
}
.columns > div {
  display: grid;
  grid-template-columns: minmax(0, 1fr);
  grid-template-rows: repeat(32, 26px);
  border-left: 1px solid #aeaeae;
}
.band { margin: 1px 2px 0 21px; line-height: 13px; padding-left: 2px; color: #777; white-space: pre; overflow: hidden; z-index: 0; }
.orange { background: #ffe6cc; }
.lunch { background: #ccff99; border-top: 1px solid #000; color: #5c6e4c; }
.teal { background: #adf7f0; }
.asst { background: #c9dcf1; }
.black { background: #000; }
.slot { margin: 1px 0 0; background: repeating-linear-gradient(transparent 0 25px, #cbcbcb 25px 26px), #fff; }
.slot i { display: block; width: 11px; height: 100%; }
.slot .inset { margin-left: 10px; }
.purple { background: #9999ff; }
.green { background: #008000; }
.lime { background: #80ff80; }
.appt {
  z-index: 2;
  margin-left: -1px;
  padding: 0 2px 0 10px;
  border: 1px solid #000;
  border-width: 1px 0 0 1px;
  background: repeating-linear-gradient(transparent 0 25px, #c4c4c4 25px 26px), #fff;
}
.card {
  position: relative;
  height: 100%;
  padding: 2px 0 0 2px;
  overflow: hidden;
  white-space: pre;
  color: #222;
  background: #dfdfe5;
  border-left: 1px solid #000;
  border-right: 2px solid #44444c;
}
.card.red { background: #ff7f7f; }
.card.crimson { background: #dc143c; }
.card.cyan { background: #00ffff; }
.card.pink { background: #fbcdfb; border-right-color: #f4f4f4; }
.age { line-height: 11px; }
.para { margin-top: 3px; }
.para:first-child { margin-top: 0; }
.para.alert { color: #e8112d; }
.crimson .alert { color: #ff2020; }
.clip { margin-top: -8px; }
.dot {
  position: absolute;
  top: 0;
  right: 0;
  width: 14px;
  height: 14px;
  border-radius: 50%;
  border: 1px solid #123;
  background: #008000;
}
.dot.white { background: #fff; }
.flag {
  position: absolute;
  top: 0;
  left: 1px;
  padding: 0 1px;
  border: 1px solid #000;
  background: #fff;
  line-height: 11px;
}
.flag.vi { color: #4030c0; left: 4px; }
.mark, .price { position: absolute; background: #fff; border: 1px solid #000; }
.mark { right: 0; bottom: 12px; width: 7px; height: 14px; text-align: center; line-height: 12px; }
.price { left: 2px; right: 0; bottom: 0; height: 13px; line-height: 12px; padding-left: 1px; overflow: hidden; }
.cross { position: absolute; left: 0; top: 0; width: 100%; height: 100%; }
.now { position: absolute; left: 0; right: 0; height: 2px; background: #d9383c; z-index: 1; }

.hscroll {
  display: flex;
  align-items: center;
  justify-content: space-between;
  height: 17px;
  margin: 0 37px 0 45px;
  padding: 0 4px;
  background: #efefef;
  color: #bbb;
}
.hscroll svg, .vscroll svg { width: 9px; height: 9px; }
.vscroll {
  display: flex;
  flex-direction: column;
  align-items: center;
  justify-content: space-between;
  width: 17px;
  padding: 4px 0;
  background: #f1f1f1;
  color: #444;
}
.content > .vscroll { margin: 27px 0 17px; }
.vscroll .thumb { width: 100%; height: 46px; background: #cdcdcd; }
.content > .vscroll .thumb { margin-top: 90px; }

/* right panel */
.panel { width: 228px; flex: none; display: flex; flex-direction: column; border-left: 1px solid #999; padding-right: 2px; }
.panel h2 { font-size: 15px; line-height: 24px; padding: 1px 0 0 5px; font-weight: 700; color: #000; }
.calendar { height: 161px; border: 1px solid #aaa; border-left: none; background: #fff; }
.cal-nav { display: flex; align-items: center; height: 34px; padding: 0 1px; }
.cal-nav button { display: flex; align-items: center; justify-content: center; gap: 3px; width: 26px; }
.cal-nav span { flex: 1; text-align: center; }
.cal-nav i { border: 5px solid transparent; }
.cal-nav .back { border-right: 6px solid #000; border-left: none; }
.cal-nav .fwd { border-left: 6px solid #000; border-right: none; }
.calendar table { width: 100%; table-layout: fixed; text-align: center; }
.calendar th { font-weight: 400; height: 13px; border-bottom: 1px solid #ccc; }
.calendar td { height: 15px; }
.calendar .out { color: #aaa; }
.calendar .pick { background: #4472b4; color: #fff; outline: 1px solid #e0a040; outline-offset: -1px; }
.cal-today { display: flex; justify-content: center; align-items: center; gap: 4px; height: 20px; }
.cal-today i { width: 18px; height: 11px; border: 1px solid #e0a040; }

.btn, .jump button {
  border: 1px solid #2d5a7c;
  border-radius: 4px;
  background: linear-gradient(#fff, #f4f7fa 50%, #e2e8ee);
}
.jump { display: flex; gap: 2px; padding: 1px 8px 0 1px; }
.jump button { flex: 1 1 17px; height: 21px; font-weight: 700; font-size: 12px; }
.jump .today { flex-basis: 44px; }
.jump svg { width: 12px; height: 14px; display: block; margin: auto; }

.pin-row { display: flex; justify-content: space-between; padding: 3px 8px 0 2px; }
.pin-left { width: 115px; display: flex; flex-direction: column; align-items: flex-end; }
.range { width: 80px; margin: 3px 19px 5px 0; border: 1px solid #bbb; }
.range button { display: flex; align-items: center; width: 100%; height: 19px; }
.range i { width: 10px; height: 10px; margin: 0 17px 0 14px; border: 1px solid #2233cc; }
.range .wide { width: 26px; margin: 0 8px 0 7px; border-color: #222; }
.range .on { background: #dde3fb; color: #2233cc; }
.clear { display: flex; align-items: center; width: 75px; height: 23px; padding-left: 7px; }
.clear svg { width: 17px; height: 17px; margin-right: 10px; border: 1px solid #bbb; }
.pair { display: flex; gap: 2px; width: 100%; padding-top: 2px; }
.pair .btn { height: 23px; flex: 1 1 50px; }
.pair .btn:first-child { flex-basis: 62px; }
.pinboard { width: 99px; border: 1px solid #000; background: #fff; color: #888; text-align: center; padding-top: 18px; line-height: 13px; }

.facts {
  display: grid;
  grid-template-columns: 79px 133px;
  column-gap: 4px;
  padding: 4px 0 0 2px;
  align-items: center;
}
.facts label { text-align: right; padding-right: 1px; }
.facts label.top { align-self: start; padding-top: 4px; line-height: 13px; }
.facts input { width: 100%; height: 19px; padding: 0 2px; text-align: right; border: 1px solid #808080; background: #fff; }
.facts .alert { color: #8b0000; font-size: 12px; font-weight: 700; }
.facts .btn { height: 20px; }
.combo { position: relative; }
.combo select { appearance: none; width: 100%; height: 21px; padding: 0 14px 0 3px; border: 1px solid #a5a5a5; background: #fff; }
.combo svg { position: absolute; right: 4px; top: 6px; width: 9px; height: 9px; color: #444; pointer-events: none; }
.listbox { display: flex; width: 86px; height: 113px; border: 1px solid #6d7f96; background: #fff; }
.listbox select { flex: 1; min-width: 0; border: none; background: none; overflow: hidden; padding: 1px 0 0 1px; }
.listbox option { height: 14px; min-height: 14px; line-height: 14px; padding: 0 2px; }
.listbox .sel { background: #b8c6dc; }
.vscroll.small { width: 15px; }
.vscroll.small .thumb { height: 33px; margin-bottom: 44px; }

.tabs { display: flex; padding-top: 3px; }
.tabs button { height: 19px; padding: 0 5px; border: 1px solid #c0c6d0; border-bottom: none; border-radius: 4px 4px 0 0; background: #fbfbfd; }
.tabs .active { background: #b5c3e4; padding: 0 6px; }
.waiting { flex: 1; display: flex; flex-direction: column; align-items: flex-end; margin: 0 0 2px 2px; border: 1px solid #47597c; background: #fcfdfe; }
.waiting table { width: 100%; table-layout: fixed; }
.waiting caption { height: 17px; line-height: 17px; font-size: 13px; font-weight: 700; color: #fff; background: linear-gradient(#7d97cc, #44619d); }
.waiting th { height: 15px; padding-right: 16px; background: #dfe9f5; border-bottom: 1px solid #8ba0bd; font-size: 12px; }
.waiting th:first-child { width: 131px; padding: 0; }
.vscroll.faint { flex: 1; color: #bbb; width: 15px; }

/* tasks */
.splitter { height: 7px; border: 1px solid #555; background: #fff; }
.tasks { border-bottom: 1px solid #7a8594; }
.filter { display: flex; align-items: center; height: 26px; padding-left: 12px; }
.filter input { width: 131px; height: 20px; margin: 0 3px 0 5px; border: 1px solid #666; background: #fff; }
.filter .btn { width: 50px; height: 20px; }
.tab-edge { display: flex; height: 4px; overflow: hidden; }
.tab-edge i { width: 90px; height: 12px; border: 1px solid #c4cad8; border-radius: 4px; }
.tab-edge .on { background: #b5c3e4; width: 80px; }

/* windows taskbar */
.taskbar { display: flex; height: 41px; background: #22323c; color: #fff; }
.taskbar button { position: relative; display: flex; align-items: center; justify-content: center; }
.start { width: 48px; }
.start svg { width: 17px; height: 17px; }
.search { display: flex; align-items: center; width: 288px; margin-right: 2px; padding-left: 12px; background: #f3f3f3; border: 1px solid #d8d8d8; }
.lens { width: 17px; height: 17px; }
.search input { flex: 1; min-width: 0; margin-left: 10px; border: none; background: none; font: 14px "Open Sans", sans-serif; color: #333; }
.search input::placeholder { color: #444; }
.art { width: 76px; height: 38px; }
.apps { display: flex; }
.apps button { width: 49px; }
.apps svg { width: 24px; height: 24px; }
.apps .current { background: #56646b; }
.apps .current svg { width: 19px; height: 19px; }
.apps .open { box-shadow: inset 0 -2px #76b9ed; }
.apps b { position: absolute; left: 26px; top: 20px; width: 8px; font-size: 9px; font-weight: 400; text-align: center; color: #fff; }
.tray { display: flex; align-items: center; margin-left: auto; padding-right: 12px; font: 12px/18px "Open Sans", sans-serif; }
.tray > svg { width: 16px; height: 16px; margin-right: 8px; }
.sun { width: 21px; height: 21px; margin-right: 10px; border-radius: 50%; background: linear-gradient(120deg, #ffb52e, #f26a10); }
.weather { font-size: 13px; margin-right: 22px; }
.clock { width: 62px; text-align: center; }
.tray .notes { width: 36px; height: 36px; margin-left: 8px; }
.tray .notes svg { width: 18px; height: 18px; }
.notes b { position: absolute; right: 0; bottom: 2px; width: 20px; height: 20px; border-radius: 50%; border: 1px solid #ccc; background: #22323c; font-size: 11px; line-height: 18px; }

/* dialog window */
.dialog {
  position: absolute;
  left: 685px;
  top: 249px;
  width: 550px;
  z-index: 10;
  border: 1px solid #5b6270;
  border-top: none;
  background: #fcfdfe;
  box-shadow: 0 6px 16px rgba(0,0,0,.45);
}
.dialog .win-buttons button { width: 30px; }
.form { padding: 8px 12px 12px 0; }
.row { display: flex; margin-bottom: 2px; }
.row > label { width: 126px; padding: 4px 6px 0 0; text-align: right; flex: none; }
.row input { height: 20px; padding: 0 2px; border: 1px solid #7a7a7a; background: #fff; }
.row input[readonly] { background: #f0f0f0; }
.w-date { width: 80px; }
.w-amount { width: 68px; }
.w-user { width: 116px; }
.row .combo { width: 179px; }
.dots { width: 18px; height: 21px; margin-left: 2px; }
.user { margin: 12px 0 4px; align-items: flex-end; }
.user > label { padding-bottom: 3px; }
.note { width: 80px; height: 22px; }
.user .note { margin-left: 3px; }
.memo { position: relative; width: 360px; }
.memo textarea {
  display: block;
  width: 100%;
  height: 138px;
  resize: none;
  padding: 1px 0;
  font-family: "DejaVu Sans Condensed", "DejaVu Sans", sans-serif;
  font-size: 10px;
  line-height: 13px;
  white-space: pre;
  overflow: hidden;
  background: #fff;
  border: 1px solid #e0e0e0;
  border-top: 2px solid #777;
  border-left: 2px solid #777;
}
.squiggle { position: absolute; left: 174px; top: 53px; width: 54px; height: 2px; background: repeating-linear-gradient(90deg, #e04050 0 2px, transparent 2px 4px); }
.second { padding-left: 245px; margin: 4px 0 3px; }
.actions { display: flex; justify-content: flex-end; gap: 6px; padding-top: 9px; }
.actions .btn { width: 75px; height: 24px; }
.actions .ok { border: 2px solid #2f6f9f; }
```

FILE: script.js
```js
// operatories: name, header colour
const ops = [
  ['JASON-\n1', '#00ffff'], ['JASON-\n2', '#00ffff'], ['LINDSA\nY - 1', '#c1ffc1'], ['LINDSA\nY - 2', '#c1ffc1'],
  ['KAMI - 1', '#9999ff'], ['KAMI - 2', '#9999ff'], ['CATE -\n1', '#008000'], ['CATE -\n2', '#008000'],
  ['RYAN -\n1', '#4cc3e8'], ['RYAN -\n2', '#4cc3e8'], ['ANDRE\nA - 1', '#ff9966'], ['ANDRE\nA -2', '#ff9966'],
  ['BEN - 1', '#b0dbda'], ['BEN - 2', '#b0dbda'], ['BRACCI\n- 1', '#a80c0c'], ['BRACCI\n- 2', '#a80c0c'],
  ['LEAH-1', '#dcc0ff'], ['LEAH-2', '#dcc0ff'], ['ORTHO\nCONSU', '#dcc0ff'], ['ORTHO\nCONSU', '#dcc0ff'],
  ['LAB\nLINDSA', '#f3f3f3'], ['RENEE', '#dd5424'], ['KARA', '#f592ee'], ['JENN', '#de2560'],
  ['SELENA', '#80ff80'], ['MARIAH', '#ff9f9f'], ['JAMIE', '#8380bf'], ['COSTIN\nA', '#a84dff'],
  ['SANDR\nA', '#78a593'], ['MCKEN\nZIE', '#e6bccb'], ['JESSIC\nA P', '#42a5e5']
];

// appointments by operatory: [start, length, text, price, colour, flag]
// start and length count quarter hours from 9am; ~ splits paragraphs, ! marks an alert
const appts = {
  4: [
    [0, 4, '-C2(F)~~~ASAP|in|pain|call|with|any|crea', '$3,52'],
    [4, 8, 'Age|53~DeRo|o,|David~Sedat|fixed|upper|bridge|,|CAST|LOW|ER|WITH|2|LOW', '$0.00'],
    [16, 4, "Age|64~Casac|ci,|'Annie|'|Annet|t", '$0.00'],
    [21, 3, 'Age|50~Bowe|n,|Wes', '$0.00', '', 'VI'],
    [24, 4, 'Age|32~Herol|d,|Amy~#-|LimE', '$359.', 'red'],
    [28, 4, 'Age|49~Kopec|, June~!Lab|Sent,|Due:', '$694.', 'crimson']
  ],
  5: [
    [0, 4, "Age|70~Zagan|iaczyk|, 'Jim'|Jame|s", '$2,39'],
    [4, 4, 'Age|63~Affolt|er,|Susan~ITER|O', '$0.00'],
    [10, 2, 'Age|42~Walte', '$274.'],
    [16, 4, "Age|73~NP-|Popla|sky09|,|'Tom'|Th", '$81.0'],
    [20, 4, 'Age|62~Parke|r,|Rose|mary|B', '$0.00'],
    [24, 4, 'Age|87~Yacuz|zo,|Charl|es~!Blood', '$0.00', 'red', 'VI'],
    [28, 4, "Age|80~Ward,|'Kathy|'|Kathr|yn", '$0.00', 'cyan']
  ],
  6: [
    [0, 4, '!y|Check|ed~#8-|BU,|#8-|CrnP|, Bu', '$5,15'],
    [4, 6, 'Age|40~Schen|k,|Jamie~#29-|AllCer|Crn,|#29-|BU,|#30-|AllCe', '$3,46'],
    [16, 4, 'Age|22~Maso|n,|Eliana~SEDA|T', '$0.00'],
    [20, 8, 'Age|32~Panta|no,|Haley~!From|Flex|Patie|nt|Forms|as of :|2022-|03-11|09:24:|52', '$1,30']
  ],
  7: [
    [0, 4, 'Age|68~Chap|man,|Phillip|J~!Lab', '$0.00'],
    [4, 4, "Age|41~Llano,|'Buffy'|Kathr|yn S~!Lab", '$0.00', '', 'FL'],
    [8, 4, "Age|34~Zangh|i ,|'Kate'|Katlyn~Heal", '$0.00'],
    [16, 4, 'Age|45~Baxte|r,|Stace|y~!Lab', '$0.00'],
    [20, 4, 'Age|74~Weig|and,|Barba|ra E~Heal', '$0.00'],
    [24, 4, 'Age|72~Shoff,|Terry~!Prem|edicat|e', '$0.00', 'red', 'VI']
  ],
  12: [[0, 8, "Age|38~Laquit|ara III,|'Bill'|Willia|m P~#5-|MDB-|C2", '$0.00']],
  16: [[24, 4, 'Age| ~Ells,|Amy', '$0.00', 'pink']],
  20: [
    [0, 4, 'Age|74~Good|nough|, Pat~Heal', '$0.00'],
    [24, 4, 'Age| ~Stodd|ard,|Richa|rd~Heal', '$0.00']
  ],
  24: [
    [0, 4, "Age|77~Heym|an,|'Ted'|Theod|ore", '$347.'],
    [4, 4, 'Age|18~Brown|,|Ryan~PerEx|, Pro,', '$152.'],
    [8, 4, 'Age|21~Johns|on,|Jame|s~PerE', '$372.'],
    [16, 6, 'Age|19~Dube,|David|II J~CmpE|x, #7-|PA,|#10-|PA+,|#24-|PA+', '$404.'],
    [22, 4, 'Age|31~Penn|er,|Aman|da~!Allerg', '$152.']
  ],
  25: [
    [0, 4, 'Age|87~Coats|, Paul|H~!Prem|edica', '$152.'],
    [4, 4, 'Age|30~Mitch|ell,|Ashle|en~PerE', '$152.'],
    [8, 2, '4y 6~Mitch|ell,', '$167.'],
    [10, 2, '4y|11m~NP-', '$199.'],
    [16, 4, '16y|11m~Pickle|s,|Jonat|han~!Allerg', '$154.'],
    [20, 4, "Age|29~DeRu|e,|'Bran|don'|Brand", '$152.'],
    [24, 4, 'Age|50~Schre|ader,|Kevin~PerEx|, #7-', '$337.', 'red', 'FL']
  ],
  28: [
    [0, 4, "Age|65~Varne|y,|'Barb'|Barba|ra", '$337.'],
    [4, 2, '4y 3~Triplet|t,', '$167.'],
    [6, 6, 'Age|47~NP-|Chan|dler,|Jessi|e~CmpE|x,|4BW,|Pano|ContF', '$402.'],
    [16, 4, "Age|46~Pickle|s,|'Chris|sy'|Chris|ty M", '$337.'],
    [20, 4, "Age|51~Wilso|n, 'A'|Andre~PerEx|, Pro,", '$152.'],
    [24, 4, "Age|86~Dayto|n,|'Dave'|David~!Von", '$244.', 'red', 'VI']
  ],
  29: [
    [0, 4, 'Age|19~Malec|,|Gavin|A~PerE', '$324.'],
    [4, 4, '13y|8m~NP-|Chan|dler,|Cody~Cmp', '$402.'],
    [8, 4, "Age|21~Zimm|erman|, 'J.T.'|John~PerE", '$152.'],
    [16, 4, 'Age|48~Pickle|s,|Scott~!Allergi|es:', '$187.'],
    [20, 4, 'Age|40~Depe|w,|Mallor|y~PerE', '$372.'],
    [24, 4, ' |10m~Schre|ader,|Ella~PerEx|,', '$405.', 'red', 'FL']
  ],
  30: [
    [0, 4, "+Wolf,|'Alex'|Alexa|nder~!Allergi|es:|ALL|SUL", '$370.'],
    [4, 4, 'Age|54~Mapst|one,|Kara~PerEx|, #7-', '$337.'],
    [8, 4, 'Age|64~Grim|m,|Jeani|e~!Allerg', '$152.'],
    [16, 3, '13y|8m~Pickle|s,|Andre|w', '$268.'],
    [19, 2, '10y|9m~Pickl', '$547.'],
    [21, 3, '13y|8m~Gleoc|kner,|Trevo', '$405.'],
    [24, 4, 'Age|75~Parr,|Bonni|e~PerEx|,', '$289.', 'red']
  ]
};

// blockouts: [operatory, start, length, class, text]
const bands = [
  [3, 0, 24, 'orange', ''], [9, 0, 24, 'orange', ''], [10, 0, 24, 'orange', ''], [11, 0, 24, 'orange', ''],
  [12, 16, 12, 'teal', ''], [5, 8, 2, 'asst', 'ASS\nT\nONL\nY'], [20, 4, 4, 'black', 'BLO\nCK'],
  [27, 16, 10, 'orange', 'MS\nG:\nKam\ni\nand\nCat\ne to\ndo\nall\nhyg\nexa\nms\nin\nthe\nafter\nnoo\nn']
];
[4, 5, 6, 7, 24, 25, 28, 29, 30].forEach(op => bands.push([op, 12, 4, 'lunch', 'LUN\nCH']));

// open time: [operatory, start, length, provider bar]
const slots = [[5, 8, 2, 'purple'], [4, 20, 1, 'purple'], [6, 10, 2, 'green'], [24, 26, 2, 'lime inset']];

function row(start, length) {
  return `grid-area:${start + 1} / 1 / span ${length}`;
}

function apptHtml([start, length, text, price, colour = '', flag]) {
  const first = text[0];
  const noAge = first === '-' || first === '+' || first === '!';
  if (first === '-' || first === '+') text = text.slice(1);
  const paras = text.split('~').map((p, i) => {
    const alert = p[0] === '!';
    const cls = i === 0 && !noAge ? 'age' : 'para' + (alert ? ' alert' : '');
    return `<div class="${cls}">${p.slice(alert ? 1 : 0).replace(/\|/g, '\n')}</div>`;
  }).join('');
  const white = colour === 'crimson' || colour === 'cyan' ? ' white' : '';
  return `<div class="appt" style="${row(start, length)}"><div class="card ${colour}">` +
    `<div class="${first === '-' ? 'clip' : ''}">${paras}</div>` +
    (noAge ? '' : `<i class="dot${white}"></i>`) +
    (flag ? `<span class="flag ${flag.toLowerCase()}">${flag}</span>` : '') +
    `<span class="mark">I</span><span class="price">${price}</span>` +
    (colour === 'pink' ? '<svg class="cross" viewBox="0 0 34 104" preserveAspectRatio="none"><path stroke="#222" d="M0 0l34 104M34 0L0 104"/></svg>' : '') +
    '</div></div>';
}

document.getElementById('ops').innerHTML = ops.map(([name, colour]) =>
  `<div class="${name.includes('\n') ? '' : 'mid'}" style="background:${colour}">${name.replace('\n', '<br>')}</div>`).join('');

document.getElementById('columns').innerHTML = ops.map((op, i) => '<div>' +
  slots.filter(s => s[0] === i).map(s => `<div class="slot" style="${row(s[1], s[2])}"><i class="${s[3]}"></i></div>`).join('') +
  bands.filter(b => b[0] === i).map(b => `<div class="band ${b[3]}" style="${row(b[1], b[2])}">${b[4]}</div>`).join('') +
  (appts[i] || []).map(apptHtml).join('') + '</div>').join('');

let times = '';
['9am', '10am', '11am', '12pm', '1pm', '2pm', '3pm', '4pm'].forEach(h => {
  times += `<div class="hour">${h}</div><div>:15</div><div>:30</div><div>:45</div>`;
});
document.getElementById('timesLeft').innerHTML = times;
document.getElementById('timesRight').innerHTML = times;

// current time marker, 3:20 PM
const now = document.createElement('div');
now.className = 'now';
now.style.top = Math.floor((15 + 20 / 60 - 9) * 104) - 1 + 'px';
document.getElementById('schedBody').appendChild(now);

let days = '';
for (let w = 0; w < 6; w++) {
  days += '<tr>';
  for (let d = 0; d < 7; d++) {
    const date = new Date(2024, 5, 30 + w * 7 + d);
    const cls = date.getMonth() !== 6 ? 'out' : date.getDate() === 3 ? 'pick' : '';
    days += `<td class="${cls}">${date.getDate()}</td>`;
  }
  days += '</tr>';
}
document.getElementById('days').innerHTML = days;
```
